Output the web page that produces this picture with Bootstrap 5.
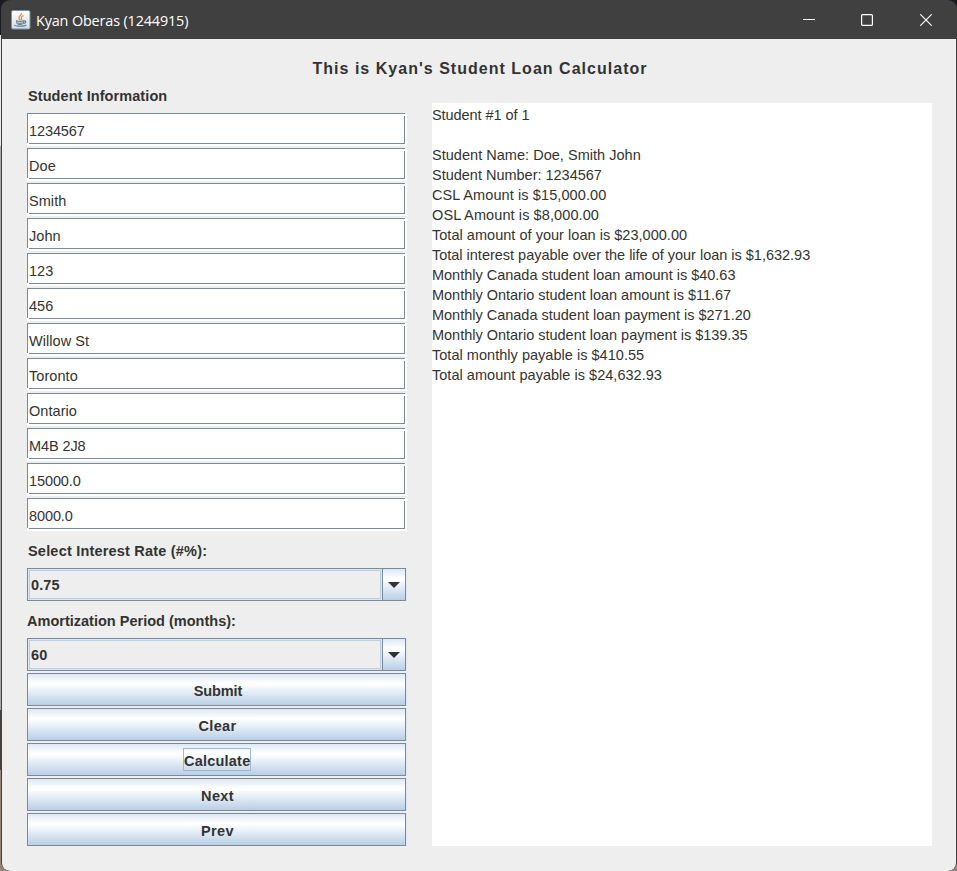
<!DOCTYPE html>
<html lang="en">
<head>
<meta charset="utf-8">
<meta name="viewport" content="width=device-width, initial-scale=1">
<title>Kyan Oberas (1244915)</title>
<link href="https://cdn.jsdelivr.net/npm/bootstrap@5.3.0/dist/css/bootstrap.min.css" rel="stylesheet">
<style>
body{height:871px;overflow:hidden;color:#333;padding-left:1px;font:14.5px/20px "Liberation Sans",Arial,sans-serif;
 background:linear-gradient(#1c1b22 0 35px,#e6e6e6 35px 146px,#aaa 146px 710px,#474340 710px 770px,#98857a 770px)}
.app-window{height:871px;padding:1px 1px 0;background:#404040;border-radius:9px;overflow:hidden}
.title-bar{height:38px;color:#fff;font:14.4px/20px "Open Sans","Noto Sans",sans-serif;padding-left:9px}
.title-bar .caption{letter-spacing:-.14px;margin-left:5px;padding-top:1px}
.win-buttons{padding-right:24px}
.win-buttons svg:nth-child(2){margin:0 47px 0 46px}
.content{height:832px;background:#eee;border-radius:0 0 8px 8px;padding:18px 24px 0 25px}
.heading{font-size:16px;line-height:22px;letter-spacing:1.02px;height:24px;padding:1px 0 0 1px}
.form-side{width:380px}
.lbl{height:35px;line-height:20px;padding:8px 0 0 1px;letter-spacing:.2px}
.lbl.first{height:32px;padding-top:5px;letter-spacing:.08px}
.lbl.flush{padding-left:0;letter-spacing:.01px}
.field{display:block;width:380px;height:33px;margin-bottom:2px;padding:2px 0 0 2px;border:0;border-radius:0;color:#333;font:inherit;letter-spacing:.06px;outline:0;
 background:linear-gradient(#7a8a99,#7a8a99) 0 0/378px 1px no-repeat,linear-gradient(#7a8a99,#7a8a99) 0 0/1px 30px no-repeat,linear-gradient(#7a8a99,#7a8a99) 2px 30px/376px 1px no-repeat,linear-gradient(#7a8a99,#7a8a99) 377px 3px/1px 28px no-repeat,#fff}
.field.tight{letter-spacing:-.1px}
.combo{width:379px;height:33px;margin-bottom:2px;border:1px solid #7a8a99;box-shadow:1px 0 #dce7f2;padding:0}
.combo .val{margin:1px;border:1px solid #b8cfe5;padding:1px 0 0 1px;line-height:26px;height:29px;letter-spacing:.08px;outline:1px solid #dce6f0}
.combo .arrow{width:23px;border-left:1px solid #7a8a99}
.metal{background:linear-gradient(#dde8f3 0,#fff 30%,#fff 33%,#dde8f3 65%,#b8cfe5 100%)}
.action{width:379px;height:33px;margin-bottom:2px;padding:2px 0 0 2px;border:1px solid #7a8a99;border-radius:0;color:#333;font:bold 14.5px/20px "Liberation Sans",Arial,sans-serif;box-shadow:1px 0 #dce7f2;letter-spacing:.35px}
.action.snug{letter-spacing:-.1px;padding-left:3px}
.action.focused{padding:0 0 0 1px;letter-spacing:.22px}
.focus-box{border:1px solid #a3b8cc;width:68px;height:23px;line-height:22px;padding-top:1px}
.output{width:500px;height:743px;margin-top:22px;padding-top:2px;background:#fff;letter-spacing:-.01px}
.output div{height:20px;white-space:pre}
.output .sp-1{letter-spacing:-.06px}
.output .sp-2{letter-spacing:.03px}
.output .sp-3{letter-spacing:.1px}
</style>
<script src="https://cdn.jsdelivr.net/npm/bootstrap@5.3.0/dist/js/bootstrap.bundle.min.js"></script>
</head>
<body>
<div class="app-window">
 <header class="title-bar d-flex align-items-center">
  <svg width="20" height="20" viewBox="0 0 20 20"><defs><linearGradient id="tile" x2="0" y2="1"><stop stop-color="#fff"/><stop offset="1" stop-color="#d5dade"/></linearGradient></defs><rect x=".5" y=".5" width="18.500" height="18.500" rx="1.500" fill="url(#tile)" stroke="#7694aa"/><path d="M10.500 3C11 5 7.500 6 8 8c.2 1 1 1.500 1.300 2.300M12.500 5.500c-1.500.8-2.600 1.800-2 3 .4.800.3 1.200-.2 1.700" fill="none" stroke="#ee8b3c" stroke-width="1.300"/><path d="M5 10.500c2 .9 6 .9 8 0M5.500 11.500c.2 3 1.500 3 3.500 3s3.400 0 3.700-3M13 11c2.500-.5 2.300 2-.5 2.500M3.500 15c1 1.600 10 1.600 12 0" fill="none" stroke="#5f8199" stroke-width="1.200"/><path d="M6 12.500h6.500v1.500H6z" fill="#7896aa"/></svg>
  <span class="caption">Kyan Oberas (1244915)</span>
  <div class="win-buttons d-flex align-items-center ms-auto">
   <svg width="12" height="12"><path d="M0 5.500h12" stroke="#fff"/></svg>
   <svg width="12" height="12"><rect x=".6" y=".6" width="10.800" height="10.800" rx="1" fill="none" stroke="#fff" stroke-width="1.200"/></svg>
   <svg width="12" height="12"><path d="M.3.3l11.400 11.400M11.700.3L.3 11.700" stroke="#fff" stroke-width="1.100"/></svg>
  </div>
 </header>
 <main class="content">
  <h1 class="heading fw-bold text-center mb-0">This is Kyan's Student Loan Calculator</h1>
  <div class="d-flex justify-content-between align-items-start">
   <form class="form-side">
    <div class="lbl first fw-bold">Student Information</div>
    <input class="field tight" value="1234567"><input class="field" value="Doe"><input class="field" value="Smith"><input class="field" value="John"><input class="field" value="123"><input class="field" value="456"><input class="field" value="Willow St"><input class="field" value="Toronto"><input class="field" value="Ontario"><input class="field tight" value="M4B 2J8"><input class="field tight" value="15000.0"><input class="field tight" value="8000.0">
    <div class="lbl fw-bold">Select Interest Rate (#%):</div>
    <div class="combo d-flex fw-bold"><span class="val flex-grow-1">0.75</span><span class="arrow metal d-flex align-items-center justify-content-center"><svg width="12" height="6"><path d="M0 0h12L6 6z" fill="#333"/></svg></span></div>
    <div class="lbl flush fw-bold">Amortization Period (months):</div>
    <div class="combo d-flex fw-bold"><span class="val flex-grow-1">60</span><span class="arrow metal d-flex align-items-center justify-content-center"><svg width="12" height="6"><path d="M0 0h12L6 6z" fill="#333"/></svg></span></div>
    <button type="button" class="btn action snug metal d-flex align-items-center justify-content-center">Submit</button>
    <button type="button" class="btn action metal d-flex align-items-center justify-content-center">Clear</button>
    <button type="button" class="btn action focused metal d-flex align-items-center justify-content-center"><span class="focus-box">Calculate</span></button>
    <button type="button" class="btn action metal d-flex align-items-center justify-content-center">Next</button>
    <button type="button" class="btn action metal d-flex align-items-center justify-content-center">Prev</button>
   </form>
   <section class="output">
    <div class="sp-1">Student #1 of 1</div>
    <div></div>
    <div class="sp-2">Student Name: Doe, Smith John</div>
    <div>Student Number: 1234567</div>
    <div class="sp-3">CSL Amount is $15,000.00</div>
    <div class="sp-3">OSL Amount is $8,000.00</div>
    <div class="sp-2">Total amount of your loan is $23,000.00</div>
    <div>Total interest payable over the life of your loan is $1,632.93</div>
    <div>Monthly Canada student loan amount is $40.63</div>
    <div>Monthly Ontario student loan amount is $11.67</div>
    <div>Monthly Canada student loan payment is $271.20</div>
    <div>Monthly Ontario student loan payment is $139.35</div>
    <div class="sp-2">Total monthly payable is $410.55</div>
    <div class="sp-2">Total amount payable is $24,632.93</div>
   </section>
  </div>
 </main>
</div>
</body>
</html>
